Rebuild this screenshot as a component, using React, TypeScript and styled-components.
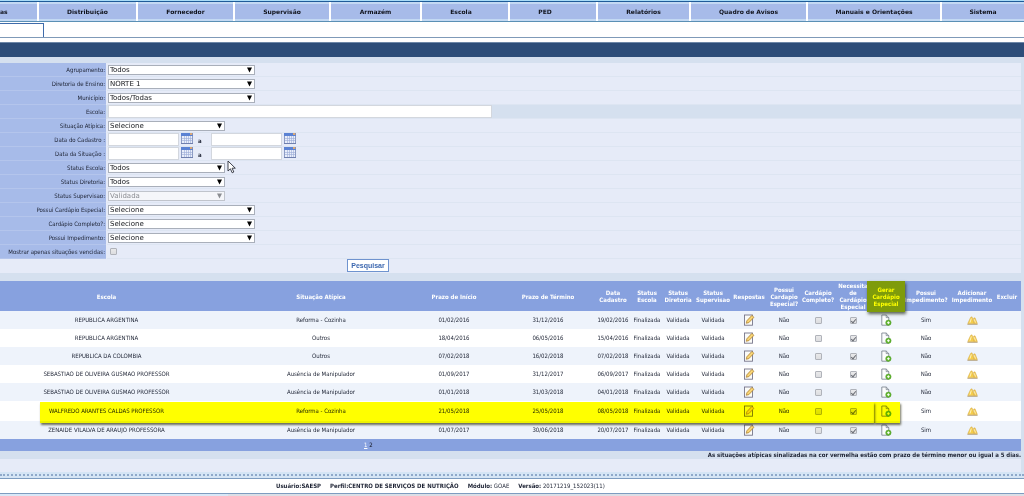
import React, { useId } from 'react';
import styled, { createGlobalStyle, css } from 'styled-components';

const sans = `'DejaVu Sans', Verdana, sans-serif`;
const narrowSans = `'DejaVu Sans Condensed', 'DejaVu Sans', Verdana, sans-serif`;

const GlobalStyle = createGlobalStyle`
  * { box-sizing: border-box; }
  html { background: #ffffff; }
  body { margin: 0; font-family: ${narrowSans}; font-size: 6px; color: #1c2233; overflow-x: hidden; }
`;

const Page = styled.div`
  position: relative;
  width: 100%;
`;

/* ---------- top navigation ---------- */

const TopEdge = styled.div`
  height: 2px;
  background: #a9dcf7;
  border-bottom: 1px solid #1f5c99;
`;

const Nav = styled.nav`
  display: grid;
  grid-template-columns: 39fr 99fr 97fr 96fr 91fr 88fr 88fr 93fr 117fr 134fr 82fr;
  height: 20px;
  background: #c3d9f3;
  border-bottom: 1px solid #5b90b5;
`;

const NavItem = styled.a<{ $trail?: number; $start?: boolean }>`
  display: flex;
  align-items: center;
  justify-content: ${(p) => (p.$start ? 'flex-start' : 'center')};
  padding-right: ${(p) => p.$trail ?? 0}px;
  border-right: 2px solid #ffffff;
  background: linear-gradient(#c3d9f3 2px, #a7bbe9 2px, #a7bbe9 17px, #c3d9f3 17px);
  font-family: ${sans};
  line-height: 8px;
  font-weight: 700;
  color: #10131c;
  text-decoration: none;
  white-space: nowrap;
  &:last-child { border-right: 0; }
`;

const TabStrip = styled.div`
  height: 16px;
  padding-top: 1px;
  border-bottom: 1px solid #7f9ab8;
`;

const Tab = styled.div`
  width: 44px;
  height: 14px;
  border-top: 1px solid #3f6cab;
  border-right: 1px solid #3f6cab;
`;

const TitleBar = styled.div`
  height: 15px;
  margin-top: 4px;
  background: #2d4d79;
  border-top: 1px solid #6d87a8;
`;

/* ---------- filter form ---------- */

const Panel = styled.main`
  padding: 6px 3px 0 0;
  background: #d5e0ef;
`;

const Row = styled.div<{ $plain?: boolean }>`
  display: grid;
  grid-template-columns: 106px 1fr;
  column-gap: 1px;
  height: 14px;
  background: ${(p) => (p.$plain ? '#d5e0ef' : '#e6ebf8')};
`;

const Label = styled.label`
  display: flex;
  align-items: center;
  justify-content: flex-end;
  padding-right: 1px;
  background: #a7bbe9;
  border-bottom: 1px solid #b4c5ec;
  line-height: 8px;
  white-space: nowrap;
`;

const Field = styled.div`
  display: flex;
  align-items: center;
  padding-left: 1px;
  border-bottom: 1px solid #dde5f2;
`;

const SelectWrap = styled.span<{ $wide?: boolean }>`
  position: relative;
  display: flex;
  width: ${(p) => (p.$wide ? 147 : 117)}px;
`;

const SelectBox = styled.select`
  appearance: none;
  width: 100%;
  height: 10px;
  padding: 0 10px 0 1px;
  border: 1px solid #a9afba;
  border-radius: 0;
  background: #ffffff;
  font-family: ${sans};
  font-size: 7px;
  line-height: 8px;
  color: #15171c;
  &:disabled { color: #8b8d92; border-color: #c0c4cc; background: #f5f6fa; opacity: 1; }
`;

const Arrow = styled.svg<{ $off?: boolean }>`
  position: absolute;
  right: 3px;
  top: 2px;
  width: 5px;
  height: 6px;
  fill: ${(p) => (p.$off ? '#8b8d92' : '#000000')};
  pointer-events: none;
`;

const TextInput = styled.input<{ $w: number }>`
  width: ${(p) => p.$w}px;
  height: 13px;
  padding: 0 2px;
  border: 1px solid #d3d7de;
  border-radius: 0;
  background: #ffffff;
  font-family: ${sans};
  font-size: 7px;
`;

const IconButton = styled.button`
  display: flex;
  padding: 0;
  margin: 0 2px 2px;
  border: 0;
  background: none;
`;

const Until = styled.span`
  width: 16px;
  padding: 3px 0 0 3px;
  line-height: 6px;
  font-weight: 700;
`;

const Check = styled.input`
  appearance: none;
  display: inline-grid;
  place-items: center;
  width: 7px;
  height: 7px;
  margin: 0;
  border: 1px solid #b0b3ba;
  border-radius: 1px;
  background: linear-gradient(#e9e9ea, #dcdde0);
  vertical-align: middle;
  &:checked::after {
    content: '';
    width: 2px;
    height: 4px;
    border: solid #6a6d74;
    border-width: 0 1px 1px 0;
    transform: rotate(40deg);
  }
`;

const FieldCheck = styled(Check)`
  margin-left: 2px;
`;

const Actions = styled.div`
  height: 14px;
  padding-left: 347px;
  background: #e6ebf8;
`;

const SearchButton = styled.button`
  display: block;
  width: 42px;
  height: 13px;
  padding: 0;
  border: 1px solid #6f93cf;
  background: #ffffff;
  font-family: 'Liberation Sans', Arial, sans-serif;
  font-size: 7px;
  line-height: 10px;
  font-weight: 700;
  color: #3d68b0;
`;

/* ---------- results ---------- */

const Results = styled.section`
  position: relative;
  margin-top: 8px;
`;

const Table = styled.table`
  width: 100%;
  table-layout: fixed;
  border-collapse: collapse;
  text-align: center;
`;

const HeadCell = styled.th`
  position: relative;
  height: 30px;
  padding: 0;
  background: #87a1df;
  line-height: 7px;
  font-weight: 700;
  color: #ffffff;
  white-space: nowrap;
`;

const Marked = styled.span`
  position: absolute;
  z-index: 1;
  inset: 0 -4px -1px;
  display: grid;
  place-content: center;
  background: #7e9b0b;
  color: #ffff00;
  box-shadow: 1px 2px 3px rgba(40, 50, 30, 0.75);
`;

const BodyRow = styled.tr<{ $tall?: boolean }>`
  height: ${(p) => (p.$tall ? 20 : 18)}px;
  background: #ffffff;
  &:nth-child(odd) { background: #eef3fb; }
`;

const lead = css`
  padding-right: 24px;
`;

const Cell = styled.td<{ $lead?: boolean }>`
  padding: 0;
  line-height: 8px;
  white-space: nowrap;
  ${(p) => p.$lead && lead}
  svg { display: block; margin: 0 auto; }
`;

const LeadHead = styled(HeadCell)`
  ${lead}
`;

const PagerCell = styled.td`
  height: 12px;
  padding: 0 0 0 364px;
  background: #87a1df;
  line-height: 8px;
  text-align: left;
`;

const PageLink = styled.a<{ $current?: boolean }>`
  color: ${(p) => (p.$current ? '#ffffff' : '#10131c')};
  text-decoration: ${(p) => (p.$current ? 'underline' : 'none')};
`;

const Highlight = styled.div<{ $from: string; $right: number }>`
  position: absolute;
  top: 121px;
  left: ${(p) => p.$from};
  right: ${(p) => p.$right}px;
  height: 21px;
  background: #ffff00;
  box-shadow: 1px 2px 2px rgba(70, 70, 40, 0.75);
  mix-blend-mode: multiply;
  pointer-events: none;
`;

const Notice = styled.p`
  height: 8px;
  margin: 0;
  line-height: 8px;
  font-weight: 700;
  text-align: right;
  white-space: nowrap;
`;

const Spacer = styled.div`
  height: 13px;
  background: #e6ebf8;
`;

const Dots = styled.div`
  height: 7px;
  padding-top: 2px;
  background: #d5e5f5;
  border-bottom: 1px solid #7d9cc0;
  &::before {
    content: '';
    display: block;
    border-top: 2px dotted #8fa9ca;
  }
`;

const Footer = styled.footer`
  display: flex;
  gap: 9px;
  height: 15px;
  padding-left: 276px;
  align-items: center;
  border-bottom: 1px solid #7d9cc0;
  background: #ffffff;
  line-height: 8px;
  white-space: nowrap;
`;

const BottomEdge = styled.div`
  height: 2px;
  background: #d9e8f7;
  padding-left: 228px;
  &::before {
    content: '';
    display: block;
    height: 2px;
    background: #dcdfe6;
  }
`;

const Pointer = styled.svg`
  position: absolute;
  left: 227px;
  top: 160px;
  width: 9px;
  height: 14px;
`;

/* ---------- icons ---------- */

const CalendarIcon = () => (
  <svg width="12" height="11" viewBox="0 0 12 11">
    <rect x="0" y="0" width="12" height="11" fill="#8d9cc4" />
    <rect x="0" y="0" width="12" height="3" fill="#5b82d3" />
    <rect x="9" y="0" width="2.4" height="2" fill="#d9a878" />
    <rect x="1" y="3" width="10" height="7" fill="#e9eefa" />
    <path d="M1 5.5h10M1 7.5h10M3.5 3v7M5.5 3v7M7.5 3v7M9.5 3v7" stroke="#9aabd6" strokeWidth=".6" />
    <path d="M0 10.5h12" stroke="#6f7fae" />
  </svg>
);

const EditIcon = () => (
  <svg width="12" height="12" viewBox="0 0 12 12">
    <rect x="1.5" y="1" width="8" height="10.2" fill="#fbfbf8" stroke="#77758a" strokeWidth=".9" />
    <path d="M3.2 9.3 3.8 6.8 8.8 1.4 11 3.3 5.8 8.7z" fill="#f2c65a" stroke="#a9803a" strokeWidth=".7" />
    <path d="M4.8 7.8 9.8 2.5" stroke="#fff0b0" strokeWidth=".7" />
  </svg>
);

const AddPageIcon = () => (
  <svg width="11" height="12" viewBox="0 0 11 12">
    <path d="M.8 1h4.4L7.8 3.6v7.6h-7z" fill="#fbfcfd" stroke="#727c88" strokeWidth=".8" />
    <path d="M5.2 1v2.6h2.6" fill="none" stroke="#727c88" strokeWidth=".7" />
    <circle cx="7.4" cy="8.7" r="2.7" fill="#63b52f" stroke="#4b9a26" strokeWidth=".5" />
    <path d="M7.4 7.3v2.8M6 8.7h2.8" stroke="#ffffff" strokeWidth=".9" />
  </svg>
);

const WarningIcon = () => (
  <svg width="11" height="9" viewBox="0 0 11 9">
    <path d="M.4 8.3h10.2" stroke="#b09a70" strokeWidth=".9" />
    <path d="M3.6 1.4 5 .8 7.2 7.5H.8z" fill="#f5cd4a" stroke="#d3a63c" strokeWidth=".5" />
    <path d="M6.6 2.2 8 1.8 10.3 7.5H7z" fill="#f3c748" stroke="#d3a63c" strokeWidth=".5" />
    <path d="M4.3 2.5 3 6.6M7.4 3.4l1 3.2" stroke="#fff6c8" strokeWidth=".9" />
  </svg>
);

/* ---------- parts ---------- */

type SelectRowProps = { label: string; value: string; wide?: boolean; disabled?: boolean };

function SelectRow({ label, value, wide, disabled }: SelectRowProps) {
  const id = useId();
  return (
    <Row>
      <Label htmlFor={id}>{label}</Label>
      <Field>
        <SelectWrap $wide={wide}>
          <SelectBox id={id} defaultValue={value} disabled={disabled}>
            <option>{value}</option>
          </SelectBox>
          <Arrow $off={disabled} viewBox="0 0 5 6"><path d="M0 .6h5L2.5 5.4z" /></Arrow>
        </SelectWrap>
      </Field>
    </Row>
  );
}

function DateRow({ label }: { label: string }) {
  const id = useId();
  return (
    <Row>
      <Label htmlFor={id}>{label}</Label>
      <Field>
        <TextInput id={id} $w={71} />
        <IconButton type="button" aria-label="Calendário inicial"><CalendarIcon /></IconButton>
        <Until>a</Until>
        <TextInput $w={71} aria-label={`${label} até`} />
        <IconButton type="button" aria-label="Calendário final"><CalendarIcon /></IconButton>
      </Field>
    </Row>
  );
}

const menu: { text: string; trail?: number }[] = [
  { text: 'as' },
  { text: 'Distribuição' },
  { text: 'Fornecedor' },
  { text: 'Supervisão' },
  { text: 'Armazém' },
  { text: 'Escola', trail: 8 },
  { text: 'PED', trail: 16 },
  { text: 'Relatórios' },
  { text: 'Quadro de Avisos' },
  { text: 'Manuais e Orientações' },
  { text: 'Sistema' },
];

const columnWidths = [168, 98, 90, 40, 28, 34, 36, 36, 34, 34, 36, 30, 50, 42, 28];

const records = [
  ['REPUBLICA ARGENTINA', 'Reforma - Cozinha', '01/02/2016', '31/12/2016', '19/02/2016', 'Sim'],
  ['REPUBLICA ARGENTINA', 'Outros', '18/04/2016', '06/05/2016', '15/04/2016', 'Não'],
  ['REPUBLICA DA COLOMBIA', 'Outros', '07/02/2018', '16/02/2018', '07/02/2018', 'Não'],
  ['SEBASTIAO DE OLIVEIRA GUSMAO PROFESSOR', 'Ausência de Manipulador', '01/09/2017', '31/12/2017', '06/09/2017', 'Não'],
  ['SEBASTIAO DE OLIVEIRA GUSMAO PROFESSOR', 'Ausência de Manipulador', '01/01/2018', '31/03/2018', '04/01/2018', 'Não'],
  ['WALFREDO ARANTES CALDAS PROFESSOR', 'Reforma - Cozinha', '21/05/2018', '25/05/2018', '08/05/2018', 'Sim'],
  ['ZENAIDE VILALVA DE ARAUJO PROFESSORA', 'Ausência de Manipulador', '01/07/2017', '30/06/2018', '20/07/2017', 'Sim'],
];

const markedRow = 5;

export default function App() {
  return (
    <Page>
      <GlobalStyle />
      <TopEdge />
      <Nav>
        {menu.map((m, i) => (
          <NavItem key={m.text} href="#" $trail={m.trail} $start={i === 0}>{m.text}</NavItem>
        ))}
      </Nav>
      <TabStrip><Tab /></TabStrip>
      <TitleBar />
      <Panel>
        <form onSubmit={(e) => e.preventDefault()}>
          <SelectRow label="Agrupamento:" value="Todos" wide />
          <SelectRow label="Diretoria de Ensino:" value="NORTE 1" wide />
          <SelectRow label="Município:" value="Todos/Todas" wide />
          <Row $plain>
            <Label htmlFor="escola">Escola:</Label>
            <Field><TextInput id="escola" $w={384} /></Field>
          </Row>
          <SelectRow label="Situação Atípica:" value="Selecione" />
          <DateRow label="Data do Cadastro :" />
          <DateRow label="Data da Situação :" />
          <SelectRow label="Status Escola:" value="Todos" />
          <SelectRow label="Status Diretoria:" value="Todos" />
          <SelectRow label="Status Supervisao:" value="Validada" disabled />
          <SelectRow label="Possui Cardápio Especial:" value="Selecione" wide />
          <SelectRow label="Cardápio Completo?:" value="Selecione" wide />
          <SelectRow label="Possui Impedimento:" value="Selecione" wide />
          <Row>
            <Label htmlFor="vencidas">Mostrar apenas situações vencidas:</Label>
            <Field><FieldCheck type="checkbox" id="vencidas" /></Field>
          </Row>
          <Actions><SearchButton type="submit">Pesquisar</SearchButton></Actions>
        </form>

        <Results>
          <Table>
            <colgroup>
              <col />
              {columnWidths.map((w, i) => <col key={i} width={w} />)}
            </colgroup>
            <thead>
              <tr>
                <LeadHead>Escola</LeadHead>
                <HeadCell>Situação Atípica</HeadCell>
                <HeadCell>Prazo de Início</HeadCell>
                <HeadCell>Prazo de Término</HeadCell>
                <HeadCell>Data<br />Cadastro</HeadCell>
                <HeadCell>Status<br />Escola</HeadCell>
                <HeadCell>Status<br />Diretoria</HeadCell>
                <HeadCell>Status<br />Supervisao</HeadCell>
                <HeadCell>Respostas</HeadCell>
                <HeadCell>Possui<br />Cardapio<br />Especial?</HeadCell>
                <HeadCell>Cardápio<br />Completo?</HeadCell>
                <HeadCell>Necessita<br />de<br />Cardápio<br />Especial</HeadCell>
                <HeadCell><Marked>Gerar<br />Cardápio<br />Especial</Marked></HeadCell>
                <HeadCell>Possui<br />Impedimento?</HeadCell>
                <HeadCell>Adicionar<br />Impedimento</HeadCell>
                <HeadCell>Excluir</HeadCell>
              </tr>
            </thead>
            <tbody>
              {records.map(([school, situation, start, end, created, blocked], i) => (
                <BodyRow key={i} $tall={i === markedRow}>
                  <Cell $lead>{school}</Cell>
                  <Cell>{situation}</Cell>
                  <Cell>{start}</Cell>
                  <Cell>{end}</Cell>
                  <Cell>{created}</Cell>
                  <Cell>Finalizada</Cell>
                  <Cell>Validada</Cell>
                  <Cell>Validada</Cell>
                  <Cell><EditIcon /></Cell>
                  <Cell>Não</Cell>
                  <Cell><Check type="checkbox" disabled aria-label="Cardápio completo" /></Cell>
                  <Cell><Check type="checkbox" disabled defaultChecked aria-label="Necessita de cardápio especial" /></Cell>
                  <Cell><AddPageIcon /></Cell>
                  <Cell>{blocked}</Cell>
                  <Cell><WarningIcon /></Cell>
                  <Cell />
                </BodyRow>
              ))}
            </tbody>
            <tfoot>
              <tr>
                <PagerCell colSpan={16}>
                  <PageLink href="#" $current>1</PageLink> <PageLink href="#">2</PageLink>
                </PagerCell>
              </tr>
            </tfoot>
          </Table>
          <Highlight $from="40px" $right={147} />
          <Highlight $from="calc(100% - 147px)" $right={121} />
        </Results>
        <Notice>As situações atípicas sinalizadas na cor vermelha estão com prazo de término menor ou igual a 5 dias.</Notice>
        <Spacer />
      </Panel>
      <Dots />
      <Footer>
        <b>Usuário:SAESP</b>
        <b>Perfil:CENTRO DE SERVIÇOS DE NUTRIÇÃO</b>
        <span><b>Módulo:</b> GOAE</span>
        <span><b>Versão:</b> 20171219_152023(11)</span>
      </Footer>
      <BottomEdge />
      <Pointer viewBox="0 0 9 14">
        <path d="M1 1v10l2.4-2.2 1.8 4 1.6-.8-1.7-3.8H8.3z" fill="#ffffff" stroke="#2b2f3a" strokeWidth=".9" />
      </Pointer>
    </Page>
  );
}
